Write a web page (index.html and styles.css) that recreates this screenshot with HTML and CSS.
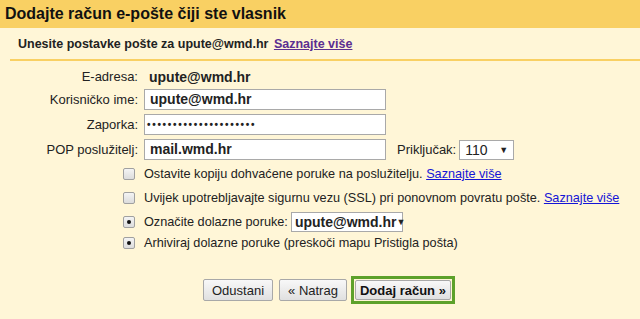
FILE: index.html
```html
<!DOCTYPE html>
<html lang="hr">
<head>
    <meta charset="UTF-8">
    <title>Dodajte račun e-pošte</title>
    <link rel="stylesheet" href="styles.css">
</head>
<body>
    <div class="title-bar">Dodajte račun e-pošte čiji ste vlasnik</div>

    <div class="content">
        <div class="subtitle">
            Unesite postavke pošte za upute@wmd.hr
            <a href="#" class="visited">Saznajte više</a>
        </div>

        <form class="settings">
            <div class="row first">
                <span class="label">E-adresa:</span>
                <span class="value">upute@wmd.hr</span>
            </div>
            <div class="row">
                <span class="label">Korisničko ime:</span>
                <span class="field">upute@wmd.hr</span>
            </div>
            <div class="row">
                <span class="label">Zaporka:</span>
                <span class="field password">•••••••••••••••••••••</span>
            </div>
            <div class="row">
                <span class="label">POP poslužitelj:</span>
                <span class="field">mail.wmd.hr</span>
                <span class="port-label">Priključak:</span>
                <span class="select port">110 <span class="arrow">▼</span></span>
            </div>

            <div class="row check-row">
                <span class="box"></span>
                <span>Ostavite kopiju dohvaćene poruke na poslužitelju. <a href="#">Saznajte više</a></span>
            </div>
            <div class="row check-row">
                <span class="box"></span>
                <span>Uvijek upotrebljavajte sigurnu vezu (SSL) pri ponovnom povratu pošte. <a href="#">Saznajte više</a></span>
            </div>
            <div class="row check-row">
                <span class="box checked"></span>
                <span>Označite dolazne poruke:</span>
                <span class="select label-select">upute@wmd.hr <span class="arrow">▼</span></span>
            </div>
            <div class="row check-row last">
                <span class="box checked"></span>
                <span>Arhiviraj dolazne poruke (preskoči mapu Pristigla pošta)</span>
            </div>

            <div class="buttons">
                <button type="button" class="btn">Odustani</button>
                <button type="button" class="btn">« Natrag</button>
                <span class="primary-wrap">
                    <button type="button" class="btn btn-primary">Dodaj račun »</button>
                </span>
            </div>
        </form>
    </div>
</body>
</html>
```

FILE: styles.css
```css
:root {
    --bar-color: #f9d063;
    --background-color: #fff6d7;
    --text-primary: #222;
    --link-color: #1515d6;
    --visited-color: #5b2f91;
    --border-color: #a9a9a9;
    --green: #5da12a;
}

* {
    margin: 0;
    padding: 0;
    box-sizing: border-box;
}

html, body {
    height: 100%;
}

body {
    font-family: "Liberation Sans", Arial, sans-serif;
    font-size: 13px;
    color: var(--text-primary);
    background-color: var(--background-color);
}

.title-bar {
    height: 28px;
    line-height: 28px;
    padding-left: 5px;
    background-color: var(--bar-color);
    font-size: 16px;
    font-weight: bold;
    color: #111;
}

.content {
    padding: 8px 0 0 10px;
}

.subtitle {
    padding: 0 0 0 8px;
    height: 25px;
    line-height: 17px;
    font-size: 12.5px;
    font-weight: bold;
    border-bottom: 2px solid var(--bar-color);
}

a {
    color: var(--link-color);
}

a.visited {
    color: var(--visited-color);
    margin-left: 2px;
}

.settings {
    padding-top: 5px;
}

.row {
    display: flex;
    align-items: center;
    height: 25px;
}

.row.first {
    height: 21px;
}

.label {
    width: 134px;
    text-align: right;
    padding-right: 6px;
}

.value {
    font-weight: bold;
    padding-left: 5px;
    font-size: 14px;
}

.field {
    width: 242px;
    height: 21px;
    line-height: 19px;
    padding-left: 5px;
    background: #fff;
    border: 1px solid var(--border-color);
    font-weight: bold;
    font-size: 14px;
}

.password {
    font-size: 10px;
    letter-spacing: 1.7px;
    padding-left: 2px;
}

.port-label {
    margin-left: 11px;
    margin-right: 3px;
}

.select {
    display: inline-flex;
    align-items: center;
    justify-content: space-between;
    height: 20px;
    background: #fff;
    border: 1px solid var(--border-color);
    padding: 0 5px;
    font-size: 14px;
}

.port {
    width: 55px;
}

.label-select {
    margin-left: 3px;
    width: 112px;
    padding: 0 3px;
    font-weight: bold;
}

.arrow {
    font-size: 9px;
    font-weight: normal;
}

.check-row {
    height: 24px;
    padding-left: 113px;
    font-size: 12.7px;
}

.check-row.last {
    height: 18px;
}

.box {
    width: 12px;
    height: 12px;
    margin-right: 9px;
    border: 1px solid #a0a0a0;
    border-radius: 2px;
    background: linear-gradient(#f4f4f4, #dcdcdc);
    position: relative;
}

.box.checked::after {
    content: "";
    position: absolute;
    left: 3px;
    top: 3px;
    width: 4px;
    height: 4px;
    border-radius: 50%;
    background: #111;
}

.buttons {
    display: flex;
    align-items: center;
    padding-left: 193px;
    margin-top: 24px;
    gap: 6px;
}

.btn {
    font-family: "Liberation Sans", Arial, sans-serif;
    font-size: 13px;
    height: 22px;
    padding: 0 8px;
    border: 1px solid #a8a8a8;
    border-radius: 2px;
    background: linear-gradient(#f8f8f8, #e0e0e0);
    color: #222;
    white-space: nowrap;
}

.primary-wrap {
    display: inline-block;
    border: 3px solid var(--green);
    padding: 1px;
    margin-left: -2px;
}

.btn-primary {
    display: block;
    font-weight: bold;
    width: 96px;
    height: 20px;
    padding: 0 4px;
    color: #111;
}
```
